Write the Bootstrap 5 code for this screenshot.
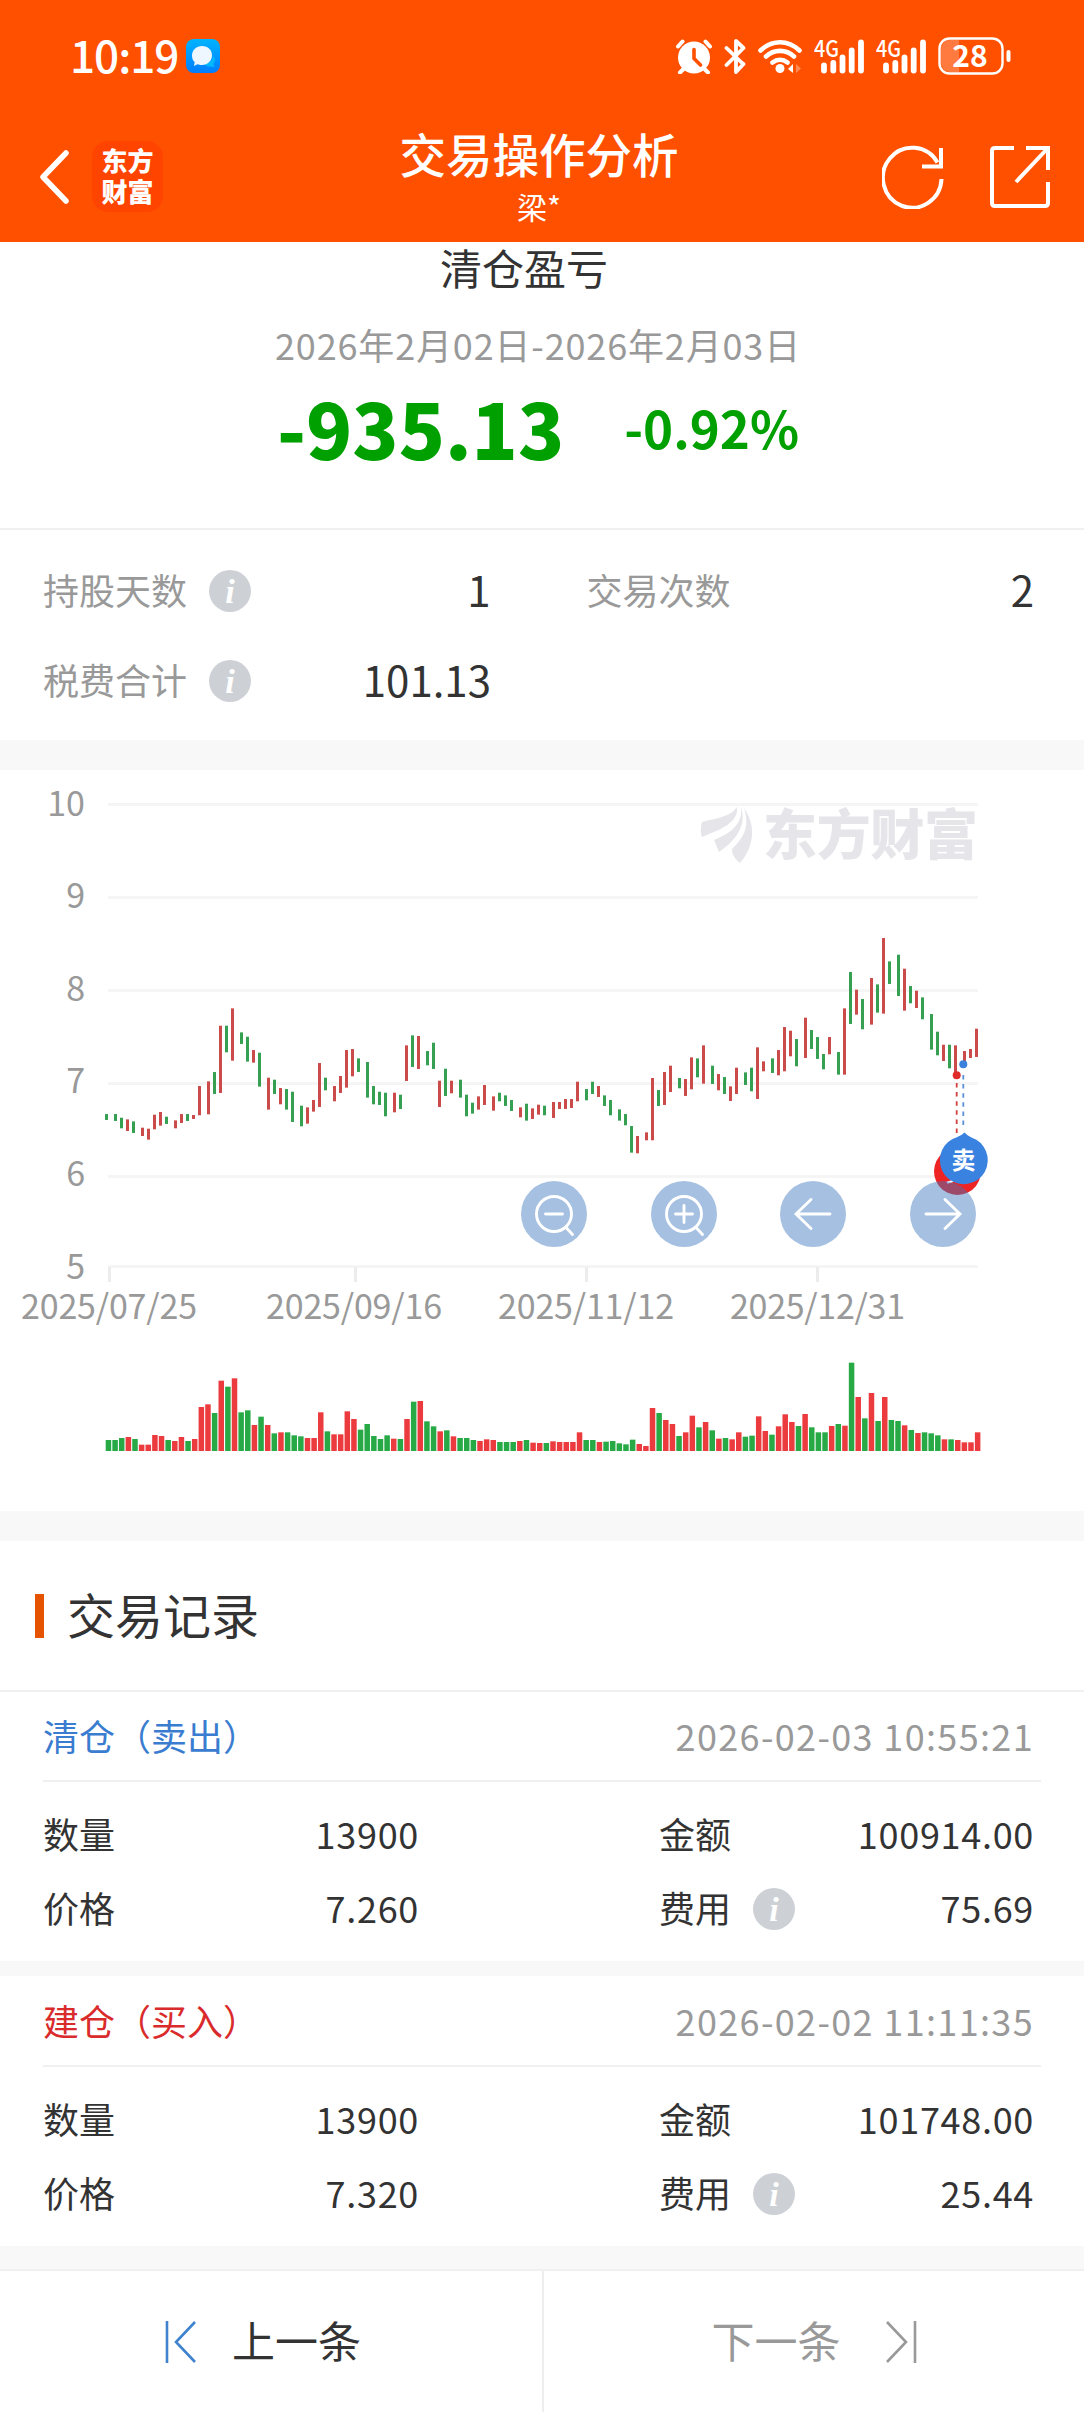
<!DOCTYPE html>
<html lang="zh-CN">
<head>
<meta charset="utf-8">
<meta name="viewport" content="width=device-width, initial-scale=1">
<title>交易操作分析</title>
<link href="https://cdn.jsdelivr.net/npm/bootstrap@5.3.0/dist/css/bootstrap.min.css" rel="stylesheet">
<style>
  body{font-family:"Noto Sans CJK SC",sans-serif;font-size:36px;line-height:1;color:#333;background:#fff;width:1084px;overflow-x:hidden}
  svg{display:block;flex:none}
  .app-head{background:#ff5000;color:#fff;height:242px}
  .status{height:114px;padding:0 72px 2px 70px}
  .clock{font-size:44px;font-weight:500;letter-spacing:-1px;padding-bottom:5px}
  .status-icons{gap:12px}
  .titlebar{height:128px;padding:0 34px 3px 40px}
  .side{flex:1 1 0}
  .brand{width:71px;height:71px;border-radius:16px;background:#ff4400;font-weight:900;font-size:26px;line-height:31px;margin-left:23px;padding-bottom:4px}
  .page-titles{position:relative;left:-6px}
  .page-title{font-size:46.5px;font-weight:500;line-height:58px}
  .page-sub{font-size:30px;line-height:48px}
  .tools{gap:46px}
  .sum-title{font-size:42px;height:49px;padding-right:36px}
  .sum-date{height:105px;color:#999;padding-right:8px;letter-spacing:.85px}
  .sum-nums{height:58px;color:#00a000;gap:60px;padding:4px 8px 0 0;margin-bottom:74px}
  .big{font-size:76px;font-weight:900}
  .mid{font-size:51px;font-weight:700}
  .muted{color:#999}
  .line-t{border-top:2px solid #f0f0f0}
  .line-b{border-bottom:2px solid #f0f0f0}
  .stats{padding:14px 50px 16px 43px}
  .stat-row{height:90px;gap:96px}
  .stat{width:448px}
  .val{font-size:42px}
  .info{margin:4px 0 0 22px}
  .strip{background:#f8f8f8}
  .strip-lg{height:30px}
  .strip-sm{height:15px}
  .strip-md{height:23px}
  .sec-head{height:151px;padding:0 0 0 35px}
  .sec-bar{width:9px;height:44px;background:#e65300;margin-right:23px}
  .sec-name{font-size:48px;padding-bottom:5px}
  .rec{padding:0 43px}
  .rec-head{padding:0 7px 2px 0;height:90px}
  .rec-head.second{height:91px}
  .stamp{letter-spacing:1.35px}
  .rec-body{padding:14px 7px 17px 0}
  .rec-row{height:74px}
  .c1{width:376px}
  .c2{width:375px}
  .num{letter-spacing:.7px}
  .sell{color:#3a7dd0}
  .buy{color:#d92b2b}
  .pager{height:143px;font-size:43px}
  .pager .half{width:542px}
  .pager .half + .half{border-left:2px solid #eee;width:542px}
  .pager .prev{gap:36px}
  .pager .next{gap:45px}
  .pager span{padding-bottom:5px}
</style>
<script src="https://cdn.jsdelivr.net/npm/bootstrap@5.3.0/dist/js/bootstrap.bundle.min.js"></script>
</head>
<body>
<svg width="0" height="0" class="position-absolute">
  <defs>
    <symbol id="info" viewBox="0 0 42 42">
      <circle cx="21" cy="21" r="21" fill="#cdd1d6"/>
      <text x="21" y="32.5" text-anchor="middle" font-family="Liberation Serif, serif" font-style="italic" font-weight="700" font-size="34" fill="#fff">i</text>
    </symbol>
    <symbol id="bars" viewBox="0 0 50 36">
      <text x="0" y="18.500" font-family="Noto Sans CJK SC, sans-serif" font-weight="500" font-size="22.5" textLength="25" lengthAdjust="spacingAndGlyphs" fill="#fff">4G</text>
      <path d="M10 27.500v5M19.300 25v7.500M28.500 19.500v13M37.700 12.500v20M47 4.500v28" stroke="#fff" stroke-width="5.800" stroke-linecap="round"/>
    </symbol>
  </defs>
</svg>

<header class="app-head">
  <div class="status d-flex align-items-center justify-content-between">
    <div class="d-flex align-items-center">
      <span class="clock">10:19</span>
      <svg class="ms-2" width="34" height="34" viewBox="0 0 34 34">
        <defs><linearGradient id="sky" x1="0" y1="0" x2="0" y2="1"><stop offset="0" stop-color="#00b4ff"/><stop offset="1" stop-color="#007dff"/></linearGradient></defs>
        <rect width="34" height="34" rx="8" fill="url(#sky)"/>
        <path d="M19 25c5-1 8-4 8-8 3 3 2 6 .5 8l1 3-4-.6c-2 .5-4 0-5.500-2.400z" fill="#00b8ff"/>
        <path d="M16 7c6 0 10 4 10 9.300S22 26 16 26c-2 0-3-.3-4.500-.8L8 27l.7-4C6.700 21.500 6 19 6 16.500 6 11 10.500 7 16 7z" fill="#eef6ff"/>
      </svg>
    </div>
    <div class="status-icons d-flex align-items-center">
      <svg width="36" height="36" viewBox="0 0 36 36" fill="none" stroke="#fff" stroke-linecap="round">
        <circle cx="18" cy="19.500" r="16" fill="#fff" stroke="none"/>
        <path d="M2 8.500 6.500 3.500M34 8.500 29.500 3.500M7.500 31 4 34.500M28.500 31l3.500 3.500" stroke-width="4"/>
        <path d="M18 11.500v9l6.500 6.500" stroke="#ff5000" stroke-width="3.600" stroke-linejoin="round"/>
      </svg>
      <svg width="22" height="36" viewBox="0 0 22 36" fill="none" stroke="#fff" stroke-width="3.800" stroke-linecap="round" stroke-linejoin="round">
        <path d="M2.500 10 17.500 24.500 19.500 26 12 34V22M2.500 27 19.500 10 12 3v13"/>
      </svg>
      <svg width="44" height="36" viewBox="0 0 44 36" fill="none" stroke="#fff" stroke-width="4.600" stroke-linecap="round">
        <path d="M2.500 12.500C14 1.500 30 1.500 41.500 12.500M8 18.500c8-7.500 20-7.500 28 0M14.500 24.500c4.500-3.500 10.500-3.500 15 0"/>
        <circle cx="22" cy="30.500" r="4.500" fill="#fff" stroke="none"/>
        <path d="M35 26v9l-5-4z" fill="#fff" stroke="none"/><path d="M38 26v9l5-4.500z" fill="#ff8a54" stroke="none"/>
      </svg>
      <svg width="50" height="36"><use href="#bars"/></svg>
      <svg width="50" height="36"><use href="#bars"/></svg>
      <svg width="74" height="46" viewBox="0 -4 74 46">
        <path d="M12 3h9v32h-9a9 9 0 0 1-9-9V12a9 9 0 0 1 9-9z" fill="#ff7a3f"/>
        <rect x="1.500" y="1.500" width="63" height="35" rx="10" fill="none" stroke="#fff" stroke-width="2.400"/>
        <path d="M70.500 15v8" stroke="#fff" stroke-width="4" stroke-linecap="round"/>
        <text x="32" y="30" text-anchor="middle" font-family="Noto Sans CJK SC, sans-serif" font-weight="700" font-size="30" fill="#fff">28</text>
      </svg>
    </div>
  </div>
  <div class="titlebar d-flex align-items-center">
    <div class="side d-flex align-items-center">
      <svg width="29" height="54" viewBox="0 0 29 54" fill="none" stroke="#fff" stroke-width="5.500" stroke-linecap="round" stroke-linejoin="round"><path d="M26 3 3 27l23 24"/></svg>
      <div class="brand d-flex flex-column align-items-center justify-content-center"><div>东方</div><div>财富</div></div>
    </div>
    <div class="page-titles text-center">
      <div class="page-title">交易操作分析</div>
      <div class="page-sub">梁*</div>
    </div>
    <div class="side tools d-flex align-items-center justify-content-end">
      <svg width="62" height="64" viewBox="0 0 62 64" fill="none" stroke="#fff" stroke-width="4"><path d="M59.500 34A29.300 30 0 1 1 55.500 17.500M59 3v18.500H40"/></svg>
      <svg width="60" height="62" viewBox="0 0 60 62" fill="none" stroke="#fff" stroke-width="4"><path d="M24 2H5Q2 2 2 5v52q0 3 3 3h50q3 0 3-3V36M36 2h22v22M57 3 26 36"/></svg>
    </div>
  </div>
</header>

<main>
  <section>
    <div class="sum-title d-flex align-items-center justify-content-center">清仓盈亏</div>
    <div class="sum-date d-flex align-items-center justify-content-center">2026年2月02日-2026年2月03日</div>
    <div class="sum-nums d-flex align-items-center justify-content-center"><span class="big">-935.13</span><span class="mid">-0.92%</span></div>
  </section>

  <section class="stats line-t">
    <div class="stat-row d-flex">
      <div class="stat d-flex align-items-center"><span class="muted">持股天数</span><svg class="info" width="42" height="42"><use href="#info"/></svg><span class="val ms-auto">1</span></div>
      <div class="stat d-flex align-items-center"><span class="muted">交易次数</span><span class="val ms-auto">2</span></div>
    </div>
    <div class="stat-row d-flex">
      <div class="stat d-flex align-items-center"><span class="muted">税费合计</span><svg class="info" width="42" height="42"><use href="#info"/></svg><span class="val ms-auto">101.13</span></div>
    </div>
  </section>
  <div class="strip strip-lg"></div>

  <section>
    <svg width="1084" height="741" viewBox="0 770 1084 741" font-family="Noto Sans CJK SC, sans-serif">
      <path d="M108 804.500H978M108 897.500H978M108 990.500H978M108 1083.500H978M108 1176.500H978M108 1266.500H978" stroke="#f5f5f5" stroke-width="3"/>
      <path d="M109.500 1267v15M355.500 1267v15M586.500 1267v15M817.500 1267v15" stroke="#ececec" stroke-width="3"/>
      <g fill="#999" font-size="34" text-anchor="end">
        <text x="85" y="816">10</text><text x="85" y="908">9</text><text x="85" y="1001">8</text><text x="85" y="1093">7</text><text x="85" y="1186">6</text><text x="85" y="1279">5</text>
      </g>
      <g fill="#999" font-size="34">
        <text x="21" y="1319" textLength="176">2025/07/25</text><text x="266" y="1319" textLength="176">2025/09/16</text><text x="498" y="1319" textLength="176">2025/11/12</text><text x="730" y="1319" textLength="175">2025/12/31</text>
      </g>
      <g fill="#e6e5ea">
        <path d="M702 822C716 818 731 817 737 807 739 823 719 830 702 837 700 832 701 825 702 822z"/>
        <path d="M741 807C748 828 732 843 719 852L714 840C731 833 743 824 741 807z"/>
        <path d="M744 808C758 828 752 850 740 863 735 859 732 855 732 849 741 840 751 829 744 808z"/>
        <text x="763" y="855" font-size="54" font-weight="900" textLength="215">东方财富</text>
      </g>
      <g id="candles"></g>
      <g id="volume"></g>
      <path d="M956.700 1083v53" stroke="#d0413f" stroke-width="1.800" stroke-dasharray="4.500 4.600"/>
      <path d="M963.300 1075v54" stroke="#5b90d8" stroke-width="1.800" stroke-dasharray="4.500 4.600"/>
      <circle cx="956.700" cy="1075.300" r="4" fill="#e02b2b"/>
      <circle cx="963.300" cy="1064.300" r="4" fill="#3a82dc"/>
      <path d="M957.500 1144 967 1150A23.500 23.500 0 1 1 948 1150z" fill="#ee2424"/>
      <text x="957.500" y="1181" font-size="24" font-weight="500" text-anchor="middle" fill="#fff">买</text>
      <g fill="#3b75be" fill-opacity=".46"><circle cx="554" cy="1214" r="33"/><circle cx="684" cy="1214" r="33"/><circle cx="813" cy="1214" r="33"/><circle cx="943" cy="1214" r="33"/></g>
      <g fill="none" stroke="#fff" stroke-width="2.900" stroke-linecap="round">
        <circle cx="554" cy="1214" r="17.500"/><path d="M545.500 1214h17M565.500 1227l7 7.500"/>
        <circle cx="684" cy="1214" r="17.500"/><path d="M675.500 1214h17M684 1205.500v17M695.500 1227l7 7.500"/>
        <path d="M830 1214H796M811 1199.500 796 1214l15 14.500M926 1214h34M945 1199.500 960 1214l-15 14.500"/>
      </g>
      <path d="M964.500 1132.500C968 1136.500 972 1137.500 976 1139.500A24 24 0 1 1 952.500 1139C957 1137 961 1136 964.500 1132.500z" fill="#3a82e0"/>
      <text x="963.500" y="1169" font-size="24" font-weight="700" text-anchor="middle" fill="#fff">卖</text>
    </svg>
  </section>
  <div class="strip strip-lg"></div>

  <section>
    <div class="sec-head line-b d-flex align-items-center"><div class="sec-bar"></div><div class="sec-name">交易记录</div></div>

    <div class="rec">
      <div class="rec-head line-b d-flex align-items-center justify-content-between"><span class="sell">清仓（卖出）</span><span class="stamp muted">2026-02-03 10:55:21</span></div>
      <div class="rec-body">
        <div class="rec-row d-flex justify-content-between">
          <div class="c1 d-flex align-items-center justify-content-between"><span>数量</span><span class="num">13900</span></div>
          <div class="c2 d-flex align-items-center justify-content-between"><span>金额</span><span class="num">100914.00</span></div>
        </div>
        <div class="rec-row d-flex justify-content-between">
          <div class="c1 d-flex align-items-center justify-content-between"><span>价格</span><span class="num">7.260</span></div>
          <div class="c2 d-flex align-items-center"><span>费用</span><svg class="info" width="42" height="42"><use href="#info"/></svg><span class="num ms-auto">75.69</span></div>
        </div>
      </div>
    </div>
    <div class="strip strip-sm"></div>

    <div class="rec">
      <div class="rec-head second line-b d-flex align-items-center justify-content-between"><span class="buy">建仓（买入）</span><span class="stamp muted">2026-02-02 11:11:35</span></div>
      <div class="rec-body">
        <div class="rec-row d-flex justify-content-between">
          <div class="c1 d-flex align-items-center justify-content-between"><span>数量</span><span class="num">13900</span></div>
          <div class="c2 d-flex align-items-center justify-content-between"><span>金额</span><span class="num">101748.00</span></div>
        </div>
        <div class="rec-row d-flex justify-content-between">
          <div class="c1 d-flex align-items-center justify-content-between"><span>价格</span><span class="num">7.320</span></div>
          <div class="c2 d-flex align-items-center"><span>费用</span><svg class="info" width="42" height="42"><use href="#info"/></svg><span class="num ms-auto">25.44</span></div>
        </div>
      </div>
    </div>
    <div class="strip strip-md"></div>
  </section>
</main>

<footer class="pager line-t d-flex">
  <div class="half prev d-flex align-items-center justify-content-center">
    <svg width="31" height="44" viewBox="0 0 31 44" fill="none" stroke="#3f83cf" stroke-width="2.600"><path d="M2 1v42M30 2 11 22l19 20"/></svg>
    <span class="pe-3">上一条</span>
  </div>
  <div class="half next muted d-flex align-items-center justify-content-center">
    <span>下一条</span>
    <svg width="31" height="44" viewBox="0 0 31 44" fill="none" stroke="#999" stroke-width="2.600"><path d="M29 1v42M1 2l19 20L1 42"/></svg>
  </div>
</footer>

<script>
// Candles: colour, x, high, low in thirds of a pixel from each segment's origin.
const segments = [
 [90,980,"G49,403,419 G76,403,422 G94,414,444 R112,419,452 G130,425,458 R157,444,467 R175,447,478 R193,405,447 R211,397,436 G229,411,431 R256,422,444 R274,403,428 G292,403,422 R310,406,416 R328,319,405 R355,305,402 G373,277,341 R391,138,338 G409,138,216 R427,86,241 G454,158,191 G472,171,244 R490,211,247 G508,219,319 R535,294,388 G553,300,341 R571,325,372 G589,328,388 G607,336,425 G634,378,438 R652,383,430 R670,361,394 R688,250,380 G706,294,330 R733,319,363 R751,289,338 R769,211,322 R787,208,288 G805,236,275 G832,247,352 G850,319,372 G868,336,374 G886,339,408"],
 [380,1000,"R43,279,336 G61,285,326 R79,137,242 G97,107,200 R115,109,206 G142,154,195 G160,129,206 R178,243,320 G196,207,287 R214,243,279 G241,240,292 G259,285,348 G277,309,340 R295,290,328 R313,256,314 R340,290,331 G358,279,303 G376,287,317 G394,301,332 R421,323,351 G439,312,361 R457,326,356 R475,315,343 G493,318,345 R520,307,353 R538,307,326 R556,298,326 R574,298,323 R592,246,303 G619,268,300 G637,246,281 R655,259,290 G673,287,317 G691,301,345 G718,329,361 G736,343,375 G754,379,457 R772,409,459 R799,398,420 R817,235,420 G835,271,317 R853,217,314 R871,198,275"],
 [670,920,"G28,475,504 R46,478,527 R64,413,507 G82,416,471 R100,377,490 G127,438,491 R145,463,510 G163,472,521 R181,500,542 R199,444,521 G226,458,494 G244,444,513 R262,383,536 R280,425,453 G307,416,458 R325,391,465 R343,322,453 R361,333,408 G379,358,438 R406,294,413 G424,331,386 G442,352,416 G460,403,447 R478,352,402 G505,397,463 R523,266,463 G541,157,311 R559,210,283 G577,238,327 R604,175,313 G622,194,277 R640,55,280 G658,125,191 G685,105,227 R703,147,271 G721,199,249 R739,213,263 G757,233,297 G784,283,388 G802,336,405 R820,375,422 G838,375,444 R856,377,455 R883,394,425 R901,388,413 R919,327,410"]
];
// Volume bar tops in thirds of a pixel; the baseline is 333.
const tops = [300,300,294,291,297,314,314,285,288,300,303,291,303,297,201,193,219,122,140,115,217,211,255,230,255,280,277,277,286,289,294,294,217,274,283,283,214,237,269,252,288,297,286,296,297,237,185,183,244,259,274,271,289,294,294,300,303,298,300,306,306,306,303,300,308,309,309,304,306,306,306,277,300,300,306,305,303,310,313,299,312,318,204,219,240,252,288,277,227,262,246,271,296,294,298,277,290,287,229,273,284,259,223,246,258,222,262,277,277,258,252,257,68,171,235,159,243,171,240,243,256,270,279,277,280,286,298,298,300,307,307,277];
const colours = [];
let candles = "", volume = "";
for (const [ox, oy, list] of segments) {
  for (const item of list.split(" ")) {
    const up = item[0] === "R";
    const [x, hi, lo] = item.slice(1).split(",").map(Number);
    colours.push(up);
    candles += `<rect x="${Math.round(ox + x / 3 - 1.45)}" y="${(oy + hi / 3 - .3).toFixed(2)}" width="3" height="${((lo - hi) / 3 + .6).toFixed(2)}" fill="${up ? "#cb4a4a" : "#36a052"}"/>`;
  }
}
tops.forEach((t, i) => {
  volume += `<rect x="${(105.7 + i * 6.635).toFixed(2)}" y="${(1340 + t / 3).toFixed(2)}" width="5.5" height="${((333 - t) / 3).toFixed(2)}" fill="${colours[i] ? "#ec3b3e" : "#27a946"}"/>`;
});
document.getElementById("candles").innerHTML = candles;
document.getElementById("volume").innerHTML = volume;
</script>
</body>
</html>
